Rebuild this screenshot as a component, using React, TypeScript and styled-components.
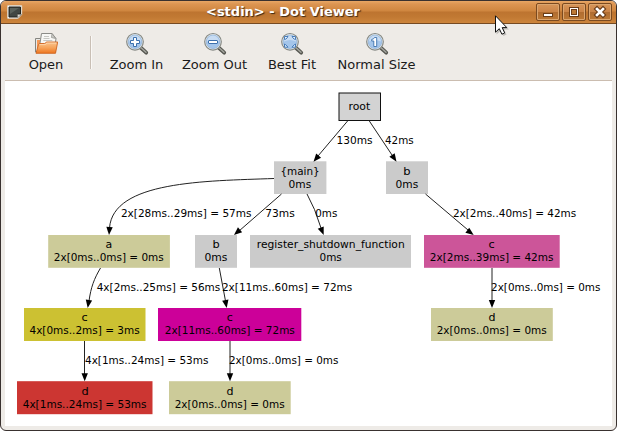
import React from "react";
import styled, { createGlobalStyle } from "styled-components";

const GlobalStyle = createGlobalStyle`
  html, body { margin: 0; padding: 0; background: #fff; overflow: hidden; }
  * { box-sizing: border-box; }
`;

const Window = styled.main`
  position: relative;
  width: 617px;
  height: 431px;
  display: flex;
  flex-direction: column;
  overflow: hidden;
  background: #eeebe7;
  border: 1px solid #39312f;
  border-radius: 6px;
  font-family: "DejaVu Sans", sans-serif;
  color: #1a1a1a;
`;

const TitleBar = styled.header`
  height: 23px;
  flex: none;
  display: grid;
  grid-template-columns: 85px 1fr 85px;
  align-items: center;
  border-bottom: 1px solid #764a22;
  background: linear-gradient(#e8a765 0, #dc9552 3px, #cf863f 10px, #bd7430 11px, #c17933 16px, #cd853c 22px);
`;

const AppIcon = styled.svg`
  display: block;
  margin-left: 6px;
`;

const Title = styled.h1`
  margin: 0 0 1px;
  padding-right: 51px;
  text-align: center;
  color: #fff;
  font-size: 13px;
  line-height: 20px;
  font-weight: 700;
  white-space: nowrap;
  text-shadow: 1px 1px 1px #3d2814;
`;

const WindowButtons = styled.div`
  display: flex;
  justify-content: flex-end;
  gap: 2px;
  padding-right: 4px;
`;

const WindowButton = styled.button`
  width: 24px;
  height: 18px;
  padding: 0;
  border: 1px solid #7b4a20;
  border-radius: 2px;
  background: linear-gradient(#d8965a, #cb8447 48%, #b06c30 50%, #bd7935);
  box-shadow: inset 0 0 0 1px #dca66f;

  svg { display: block; }
`;

const Toolbar = styled.nav`
  height: 57px;
  flex: none;
  display: flex;
  margin: 0 4px;
  border-bottom: 1px solid #cbbdb0;
`;

const ToolButton = styled.button<{ $width: number }>`
  width: ${(p) => p.$width}px;
  padding: 8px 0 0;
  border: 0;
  background: none;
  display: flex;
  flex-direction: column;
  align-items: center;
  gap: 1px;
  color: #1a1a1a;
  font: 13px/16px "DejaVu Sans", sans-serif;
  white-space: nowrap;

  svg { display: block; flex: none; }
`;

const Separator = styled.div`
  width: 2px;
  height: 33px;
  margin: 12px 7px 0 3px;
  border-left: 1px solid #c9bfb5;
  border-right: 1px solid #faf8f6;
`;

const Canvas = styled.section`
  flex: 1;
  margin: 0 4px 4px;
  overflow: hidden;
  background: #fff;
`;

const Graph = styled.svg`
  display: block;
  font-family: "DejaVu Sans", sans-serif;
`;

const GraphText = styled.text<{ $size: number }>`
  font-size: ${(p) => p.$size}px;
  fill: #000;
`;

const Edge = styled.path`
  fill: none;
  stroke: #222;
  stroke-width: 1;
`;

const Pointer = styled.svg`
  position: absolute;
  left: 493px;
  top: 13px;
  pointer-events: none;
`;

type Line = [text: string, left: number, right: number, baseline: number, size?: number];

interface GraphNode {
  x: number;
  y: number;
  w: number;
  h: number;
  fill: string;
  outlined?: boolean;
  lines: Line[];
}

const nodes: GraphNode[] = [
  { x: 339, y: 93, w: 41.5, h: 27.5, fill: "#d3d3d3", outlined: true, lines: [["root", 349, 370, 110, 11]] },
  { x: 274, y: 161.3, w: 52.4, h: 32.7, fill: "#cbcbcb", lines: [["{main}", 281, 319.5, 175, 11]  , ["0ms", 289, 311, 188]] },
  { x: 386, y: 161.3, w: 42, h: 32.7, fill: "#cbcbcb", lines: [["b", 403.7, 410.3, 175], ["0ms", 396, 418, 188]] },
  { x: 48.2, y: 235, w: 121.7, h: 32.8, fill: "#cccb99", lines: [["a", 106, 112, 248.3], ["2x[0ms..0ms] = 0ms", 54.3, 163.5, 261.3]] },
  { x: 195, y: 235, w: 42, h: 32.8, fill: "#cbcbcb", lines: [["b", 213, 219.5, 248.3], ["0ms", 205, 227.3, 261.3]] },
  { x: 250, y: 235, w: 161, h: 32.8, fill: "#cbcbcb", lines: [["register_shutdown_function", 257.3, 404.5, 248.3, 11], ["0ms", 320, 341.6, 261.3]] },
  { x: 424, y: 235, w: 135.7, h: 32.8, fill: "#cc5599", lines: [["c", 489, 494.5, 248.3], ["2x[2ms..39ms] = 42ms", 430.3, 553.3, 261.3]] },
  { x: 24, y: 308, w: 121.5, h: 33, fill: "#ccc132", lines: [["c", 82, 87.5, 321], ["4x[0ms..2ms] = 3ms", 30, 139.4, 334.3]] },
  { x: 158, y: 308, w: 143.3, h: 33, fill: "#cc0099", lines: [["c", 227.2, 232.6, 321], ["2x[11ms..60ms] = 72ms", 165.3, 294.6, 334.3]] },
  { x: 431, y: 308, w: 121.8, h: 33, fill: "#cccb99", lines: [["d", 489, 495.3, 321], ["2x[0ms..0ms] = 0ms", 437.2, 546.5, 334.3]] },
  { x: 17, y: 381.2, w: 135.5, h: 33, fill: "#cc3632", lines: [["d", 82, 88.5, 395], ["4x[1ms..24ms] = 53ms", 23.2, 146.4, 408]] },
  { x: 169, y: 381.2, w: 121.7, h: 33, fill: "#cccb99", lines: [["d", 227, 233.3, 395], ["2x[0ms..0ms] = 0ms", 175.2, 284.4, 408]] },
];

const labels: Line[] = [
  ["130ms", 337, 372.4, 144, 10.8],
  ["42ms", 385.5, 413.5, 144, 10.8],
  ["2x[28ms..29ms] = 57ms", 121.4, 251.3, 217.2],
  ["73ms", 265.7, 294.5, 217.2, 10.8],
  ["0ms", 315.7, 337.1, 217.2],
  ["2x[2ms..40ms] = 42ms", 453.4, 576, 217.2],
  ["4x[2ms..25ms] = 56ms", 97.2, 220.1, 291],
  ["2x[11ms..60ms] = 72ms", 222.4, 352.1, 291],
  ["2x[0ms..0ms] = 0ms", 491.6, 600.2, 291],
  ["4x[1ms..24ms] = 53ms", 85.5, 208.2, 364],
  ["2x[0ms..0ms] = 0ms", 229.5, 338.2, 364],
];

const edges: { d: string; tip: [number, number]; angle: number }[] = [
  { d: "M348 120.5 L318 156", tip: [313.5, 161.7], angle: 130 },
  { d: "M369 120.5 L392 155", tip: [396.5, 161.7], angle: 56 },
  { d: "M274 178.5 C205 181 113 181 109.5 228", tip: [109, 235], angle: 94 },
  { d: "M281.5 194 L239 231", tip: [234, 235], angle: 139 },
  { d: "M307 194 Q315 208 321 228", tip: [323.7, 235], angle: 68 },
  { d: "M425.5 194 L468 230", tip: [473.7, 235], angle: 37 },
  { d: "M100.5 268 C94 279 91 287 89 301", tip: [87.7, 308], angle: 99 },
  { d: "M219.3 268 L225.5 301", tip: [226.7, 308], angle: 80 },
  { d: "M492 268 V301", tip: [492, 308], angle: 90 },
  { d: "M84.5 341 V374", tip: [84.7, 381.2], angle: 90 },
  { d: "M230 341 V374", tip: [230, 381.2], angle: 90 },
];

function FittedText({ line }: { line: Line }) {
  const [text, left, right, baseline, size = 10.4] = line;
  return (
    <GraphText
      $size={size}
      x={left - 0.5}
      y={baseline}
      textLength={right - left + 0.7}
      lengthAdjust="spacingAndGlyphs"
    >
      {text}
    </GraphText>
  );
}

type ZoomKind = "in" | "out" | "fit" | "normal";

function ZoomIcon({ kind }: { kind: ZoomKind }) {
  return (
    <svg width="24" height="24" viewBox="0 0 24 24">
      <path d="M15.5 15.5 L21.2 20.7" stroke="#555650" strokeWidth="3.8" strokeLinecap="round" />
      <path d="M15.5 15.2 L21 20.2" stroke="#a5a69f" strokeWidth="1.5" strokeLinecap="round" />
      <circle cx="10" cy="9.8" r="8.3" fill="#e8edf0" stroke="#858883" strokeWidth="1.2" />
      <circle cx="10" cy="9.8" r="6.8" fill="#a4c5ea" stroke="#8eafd4" strokeWidth=".7" />
      <path d="M4 9.5 A6 6 0 0 1 16 9.5 Q10 6.5 4 9.5" fill="#c8dcf3" />
      {kind === "in" && (
        <path d="M8.5 5.5h3v3h3v3h-3v3h-3v-3h-3v-3h3z" fill="#fff" stroke="#3c70ad" />
      )}
      {kind === "out" && <rect x="5.5" y="8.5" width="9" height="3" rx=".5" fill="#fff" stroke="#3c70ad" />}
      {kind === "fit" && (
        <g fill="#e9f4ff" stroke="#3b73b4" strokeWidth=".9">
          <path d="M4.5 7.5V4.5h3.5L7 6 6 7zM15.5 7.5V4.5h-3.5L13 6l1 1zM4.5 12v3.2h3.5L7 14l-1-1zM15.5 12v3.2h-3.5L13 14l1-1z" />
        </g>
      )}
      {kind === "normal" && (
        <path d="M9.5 5.5h2.2v9H8.8V9H6.7V7.4Q8.9 7.2 9.5 5.5z" fill="#fff" stroke="#3c70ad" strokeWidth=".9" />
      )}
    </svg>
  );
}

function OpenIcon() {
  return (
    <svg width="24" height="24" viewBox="0 0 24 24">
      <defs>
        <linearGradient id="folder" x2="0" y2="1">
          <stop stopColor="#fac58f" />
          <stop offset=".5" stopColor="#f6a45c" />
          <stop offset="1" stopColor="#ee7620" />
        </linearGradient>
      </defs>
      <path d="M1.5 20V6.5h5l2 2h13V20z" fill="#e9e8e5" stroke="#858580" />
      <path d="M3 17V8h3v5z" fill="#f69a58" />
      <path d="M5.5 14.5l2-13H18l4 5-1 8z" fill="#f7f7f5" stroke="#8b8b87" />
      <path d="M18 1.5l-.5 4 4 1z" fill="#cfcfcb" stroke="#8b8b87" strokeWidth=".7" />
      <path d="M10 4.5h5M9.5 6.5h6M9.3 8.5h9" stroke="#b9b9b5" strokeWidth=".8" />
      <path d="M4.5 12.5q.2-1 1.2-1h5l2-1.5h11L21.5 21.3H2z" fill="url(#folder)" stroke="#cf6420" strokeWidth=".9" />
      <path d="M5.7 12.6h5.5l2-1.5h9" stroke="#ffe0bd" strokeWidth=".7" fill="none" />
    </svg>
  );
}

const zoomTools: { label: string; kind: ZoomKind; width: number }[] = [
  { label: "Zoom In", kind: "in", width: 75 },
  { label: "Zoom Out", kind: "out", width: 81 },
  { label: "Best Fit", kind: "fit", width: 74 },
  { label: "Normal Size", kind: "normal", width: 95 },
];

export default function App() {
  return (
    <>
      <GlobalStyle />
      <Window>
        <TitleBar>
          <AppIcon width="16" height="14" viewBox="0 0 16 14">
            <path d="M.7.7h14v8.8l-3.5 3.8H.7z" fill="#fff" stroke="#ded8cb" />
            <path d="M2 2h11.5v7h-3v3H2z" fill="#414743" stroke="#20231f" />
            <path d="M3 3h9L3 9z" fill="#5a625c" />
            <path d="M10.5 12.8V9.5h4z" fill="#dedfda" stroke="#76736b" strokeWidth=".7" />
          </AppIcon>
          <Title>&lt;stdin&gt; - Dot Viewer</Title>
          <WindowButtons>
            <WindowButton aria-label="Minimize">
              <svg width="22" height="16"><rect x="6.5" y="9.5" width="9" height="3" fill="#fff" stroke="#6b3d18" /></svg>
            </WindowButton>
            <WindowButton aria-label="Maximize">
              <svg width="22" height="16">
                <rect x="6.5" y="3.5" width="9" height="9" fill="#fff" stroke="#6b3d18" />
                <rect x="8.5" y="5.5" width="5" height="5" fill="#bd7935" stroke="#6b3d18" />
              </svg>
            </WindowButton>
            <WindowButton aria-label="Close">
              <svg width="22" height="16">
                <path d="M8 5l6 6M14 5l-6 6" stroke="#6b3d18" strokeWidth="4.8" strokeLinecap="square" />
                <path d="M8 5l6 6M14 5l-6 6" stroke="#fff" strokeWidth="2.6" strokeLinecap="square" />
              </svg>
            </WindowButton>
          </WindowButtons>
        </TitleBar>
        <Toolbar>
          <ToolButton $width={82}><OpenIcon />Open</ToolButton>
          <Separator />
          {zoomTools.map((t) => (
            <ToolButton key={t.kind} $width={t.width}><ZoomIcon kind={t.kind} />{t.label}</ToolButton>
          ))}
        </Toolbar>
        <Canvas>
          <Graph width="607" height="345" viewBox="5 81 607 345">
            {nodes.map((n, i) => (
              <g key={i}>
                <rect x={n.x} y={n.y} width={n.w} height={n.h} fill={n.fill} stroke={n.outlined ? "#111" : "none"} />
                {n.lines.map((line, j) => <FittedText key={j} line={line} />)}
              </g>
            ))}
            {edges.map((e, i) => (
              <g key={i}>
                <Edge d={e.d} />
                <path d="M0 0L-8 -3.2V3.2z" transform={`translate(${e.tip[0]} ${e.tip[1]}) rotate(${e.angle})`} />
              </g>
            ))}
            {labels.map((line, i) => <FittedText key={i} line={line} />)}
          </Graph>
        </Canvas>
        <Pointer width="16" height="22" viewBox="-1 -1 16 22">
          <path d="M1.5 2.5v17l4-3.5 3 5 3-1.5-2.5-5h5z" fill="#0003" />
          <path d="M.5.8v16.4l3.8-3.5 2.6 5.5 2.8-1.3-2.5-5.3h4.6z" fill="#fff" stroke="#111" />
        </Pointer>
      </Window>
    </>
  );
}
